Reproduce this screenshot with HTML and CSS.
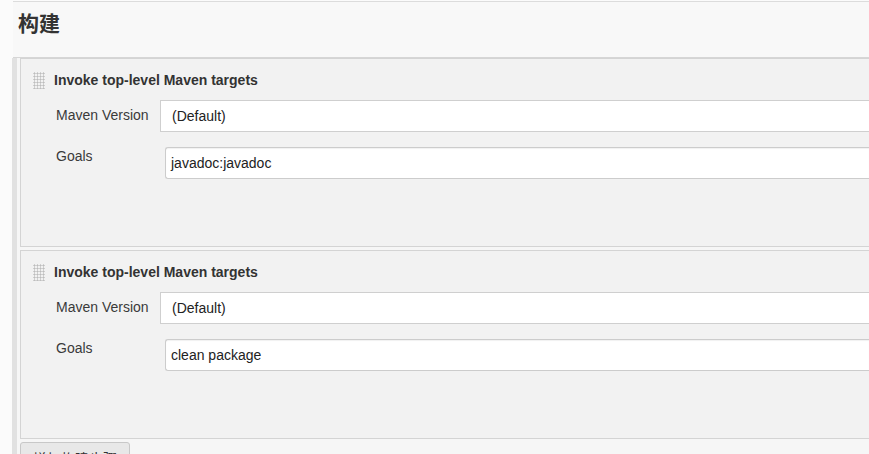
FILE: index.html
```html
<!DOCTYPE html>
<html lang="zh">
<head>
<meta charset="utf-8">
<title>构建</title>
<link rel="stylesheet" href="styles.css">
</head>
<body>
<div class="page">
  <div class="section-header">
    <h2 class="section-title">构建</h2>
  </div>
  <div class="builders">
    <div class="bar"></div>
    <div class="chunks">
      <div class="chunk">
        <div class="chunk-title"><span class="handle"></span><span class="chunk-name">Invoke top-level Maven targets</span></div>
        <div class="row row-select">
          <div class="label label-select">Maven Version</div>
          <div class="select">(Default)</div>
        </div>
        <div class="row">
          <div class="label label-text">Goals</div>
          <div class="text-input">javadoc:javadoc</div>
        </div>
      </div>
      <div class="chunk">
        <div class="chunk-title"><span class="handle"></span><span class="chunk-name">Invoke top-level Maven targets</span></div>
        <div class="row row-select">
          <div class="label label-select">Maven Version</div>
          <div class="select">(Default)</div>
        </div>
        <div class="row">
          <div class="label label-text">Goals</div>
          <div class="text-input">clean package</div>
        </div>
      </div>
      <div class="actions">
        <button class="add-btn">增加构建步骤</button>
      </div>
    </div>
  </div>
</div>
</body>
</html>
```

FILE: styles.css
```css
html, body {
  margin: 0;
  padding: 0;
  background: #fbfbfb;
  height: 100%;
  overflow: hidden;
}

body {
  font-family: "Liberation Sans", Arial, "Noto Sans CJK SC", sans-serif;
  color: #333;
}

.page {
  padding-top: 1px;
}

.section-header {
  margin-left: 13px;
  border-top: 1px solid #dcdcdc;
  border-bottom: 1px solid #d6d6d6;
  background: #f8f8f8;
  height: 55px;
  box-sizing: content-box;
}

.section-title {
  margin: 0;
  padding: 6px 0 0 5px;
  font-family: "Noto Sans CJK SC", "Liberation Sans", sans-serif;
  font-size: 21px;
  line-height: 28px;
  font-weight: 700;
  color: #333;
}

.builders {
  display: flex;
  margin-left: 12px;
}

.bar {
  width: 5px;
  flex: none;
  background: #e1e1e1;
  min-height: 420px;
}

.chunks {
  flex: 1;
  padding-left: 3px;
  background: #f6f6f6;
  min-width: 0;
}

.chunk {
  background: #f2f2f2;
  border: 1px solid #d4d4d4;
  border-right: none;
  padding: 13px 0 67px 0;
  margin-bottom: 3px;
}

.chunk-title {
  display: flex;
  align-items: center;
  height: 17px;
  padding-left: 12px;
  margin-bottom: 11px;
}

.handle {
  width: 12px;
  height: 17px;
  margin-right: 9px;
  background-image: radial-gradient(circle, #bdbdbd 0.9px, transparent 1.2px);
  background-size: 3px 3px;
  background-position: 0 0;
}

.chunk-name {
  font-size: 14px;
  font-weight: 700;
  line-height: 17px;
  color: #333;
}

.row {
  display: flex;
  align-items: flex-start;
}

.row-select {
  margin-bottom: 15px;
}

.label {
  width: 104px;
  flex: none;
  padding-left: 35px;
  font-size: 14px;
  line-height: 17px;
  color: #3a3a3a;
}

.label-select {
  padding-top: 7px;
}

.label-text {
  padding-top: 1px;
}

.select {
  flex: 1;
  height: 30px;
  border: 1px solid #cfcfcf;
  border-right: none;
  background: #fff;
  font-size: 14px;
  line-height: 30px;
  padding-left: 11px;
  color: #222;
}

.text-input {
  flex: 1;
  margin-left: 5px;
  height: 30px;
  border: 1px solid #cccccc;
  border-right: none;
  border-radius: 3px 0 0 3px;
  box-shadow: inset 0 1px 1px rgba(0, 0, 0, 0.06);
  background: #fff;
  font-size: 14px;
  line-height: 30px;
  padding-left: 5px;
  color: #222;
}

.actions {
  padding-top: 0;
  background: #f6f6f6;
}

.add-btn {
  margin: 0;
  width: 110px;
  height: 28px;
  border: 1px solid #c8c8c8;
  border-radius: 3px;
  background: #e8e8e8;
  font-family: "Noto Sans CJK SC", "Liberation Sans", sans-serif;
  font-size: 14px;
  color: #333;
  padding: 4px 0 0 0;
  text-align: center;
  line-height: 20px;
  vertical-align: top;
}
```
